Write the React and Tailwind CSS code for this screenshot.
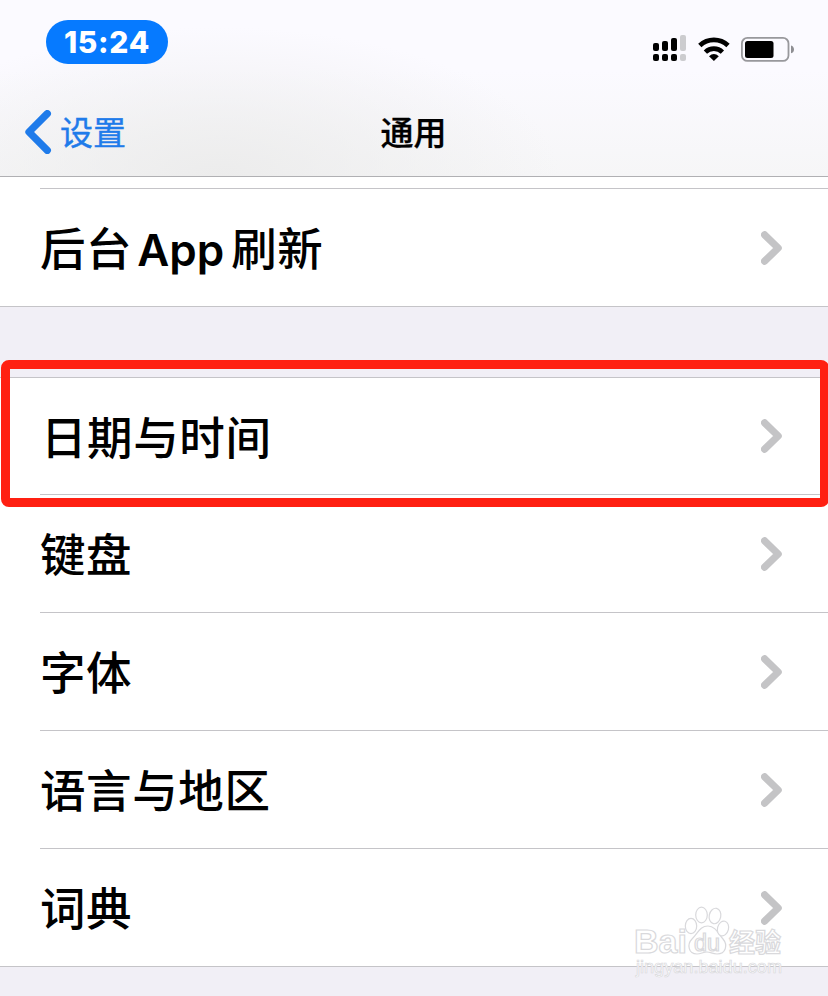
import React from 'react';
import clsx from 'clsx';

const rows = ['日期与时间', '键盘', '字体', '语言与地区', '词典'];

function SignalIcon() {
  const bars = [
    { x: 0, y: 8, h: 8 },
    { x: 9, y: 6, h: 10 },
    { x: 18, y: 3, h: 13 },
    { x: 27, y: 0, h: 16 },
  ];
  return (
    <svg width="33" height="26" viewBox="0 0 33 26">
      {bars.map((bar, i) => (
        <g key={bar.x} fill={i === 3 ? '#cccccf' : '#000'}>
          <rect x={bar.x} y={bar.y} width="6" height={bar.h} rx="2" />
          <rect x={bar.x} y="19" width="6" height="7" rx="2" />
        </g>
      ))}
    </svg>
  );
}

function WifiIcon() {
  return (
    <svg width="32" height="26" viewBox="0 0 32 26" fill="none" stroke="#000">
      <path d="M1.8 10.5A20.5 20.5 0 0 1 30 10.5" strokeWidth="4.8" />
      <path d="M7.4 17.2A12 12 0 0 1 24.4 17.2" strokeWidth="4.6" />
      <path d="M11 21.2Q15.9 17 20.8 21.2L15.9 26Z" fill="#000" stroke="none" />
    </svg>
  );
}

function BatteryIcon() {
  return (
    <svg width="53" height="27" viewBox="0 0 53 27">
      <rect x="0.9" y="2.9" width="46.6" height="23" rx="5.5" fill="none" stroke="#98989c" strokeWidth="1.8" />
      <rect x="4" y="6" width="28.5" height="17" rx="2.5" fill="#000" />
      <path d="M50 10.5C54 11.5 54 17.3 50 18.3Z" fill="#8e8e92" />
    </svg>
  );
}

function Chevron() {
  return (
    <svg width="22" height="34" viewBox="0 0 22 34" fill="none" className="shrink-0">
      <path d="M3.6 3.8L17.2 17L3.6 30.2" stroke="#c4c4c6" strokeWidth="7.2" strokeLinecap="round" strokeLinejoin="round" />
    </svg>
  );
}

function Row({ children, first, last }) {
  return (
    <div className="pl-10">
      <div
        className={clsx(
          'flex items-center justify-between pr-[45px]',
          first || last ? 'h-[117px]' : 'h-[118px]',
          !last && 'border-b border-[#c5c4c8]'
        )}
      >
        <span className={clsx('pt-[5px] text-[45.5px] leading-[60px] font-medium tracking-[0.6px] whitespace-nowrap', first && 'pl-px')}>
          {children}
        </span>
        <Chevron />
      </div>
    </div>
  );
}

function Watermark() {
  return (
    <svg
      width="160"
      height="80"
      viewBox="0 0 160 80"
      fill="#fff"
      stroke="#d9d9dc"
      className="absolute top-[902px] left-[630px] font-['Liberation_Sans','Noto_Sans_CJK_SC',sans-serif]"
    >
      <g strokeWidth="1.2">
        <text x="4" y="51" fontSize="34" fontWeight="700" textLength="53" lengthAdjust="spacingAndGlyphs">Bai</text>
        <path d="M78 24C85 24 88 31 93 37C98 43 96 52 87 52C82 52 81 50 77 50C73 50 71 52 67 52C58 52 57 42 62 37C68 31 70 24 78 24Z" />
        <ellipse cx="61" cy="24" rx="5.7" ry="7.7" />
        <ellipse cx="71.5" cy="13" rx="5.8" ry="7.8" />
        <ellipse cx="85" cy="14" rx="5.8" ry="7.8" transform="rotate(12 85 14)" />
        <ellipse cx="93" cy="26.5" rx="5.5" ry="7.5" transform="rotate(15 93 26.5)" />
        <text x="64" y="49" fontSize="23" textLength="26" lengthAdjust="spacingAndGlyphs">du</text>
        <text x="99" y="49.5" fontSize="26" fontWeight="700">经验</text>
      </g>
      <text x="6" y="71" fontSize="18" strokeWidth="0.7" textLength="146" lengthAdjust="spacingAndGlyphs">jingyan.baidu.com</text>
    </svg>
  );
}

export default function App() {
  return (
    <div className="relative h-[996px] w-[828px] overflow-hidden bg-[#f1eff6] font-['Inter','Noto_Sans_CJK_SC',sans-serif] text-black">
      <header className="h-[177px] border-b border-[#b0b0b3] bg-[radial-gradient(ellipse_340px_150px_at_220px_177px,#ececec,transparent),linear-gradient(#fbfaff_40%,#f6f6f7)]">
        <div className="flex h-[88px] items-start justify-between pt-5 pr-[34px] pl-[46px]">
          <div className="flex h-11 w-[122px] items-center justify-center rounded-full bg-[#067aff] text-[30px] font-extrabold tracking-[0.7px] text-white">
            15:24
          </div>
          <div className="flex items-start pt-[15px]">
            <SignalIcon />
            <div className="ml-3 flex">
              <WifiIcon />
              <div className="ml-[11px]">
                <BatteryIcon />
              </div>
            </div>
          </div>
        </div>
        <div className="grid h-[88px] grid-cols-3 items-center">
          <div className="flex items-center pl-6 text-[#1f7bea]">
            <svg width="28" height="44" viewBox="0 0 28 44" fill="none">
              <path d="M23.3 3.7L5 22L23.3 40.3" stroke="currentColor" strokeWidth="7.3" strokeLinecap="round" strokeLinejoin="round" />
            </svg>
            <span className="ml-2 pt-0.5 text-[33px] leading-[44px] [-webkit-text-stroke:0.4px]">设置</span>
          </div>
          <h1 className="pt-0.5 pr-px text-center text-[33px] leading-[44px] font-medium [-webkit-text-stroke:0.3px]">通用</h1>
        </div>
      </header>

      {/* Tail of the previous group */}
      <section className="border-b border-[#c5c4c8] bg-white pt-[11px]">
        <div className="ml-10 h-px bg-[#c5c4c8]" />
        <Row last>
          后台<span className="mr-[7px] ml-[5px] text-[44px] font-semibold tracking-normal">App</span>刷新
        </Row>
      </section>

      <section className="mt-[70px] border-y border-[#c5c4c8] bg-white">
        {rows.map((label, i) => (
          <Row key={label} first={i === 0} last={i === rows.length - 1}>{label}</Row>
        ))}
      </section>

      {/* Highlight around the date row */}
      <div className="absolute top-[360px] left-px h-[147px] w-[828px] rounded-[8px] border-9 border-[#ff2012]" />

      <Watermark />
    </div>
  );
}
